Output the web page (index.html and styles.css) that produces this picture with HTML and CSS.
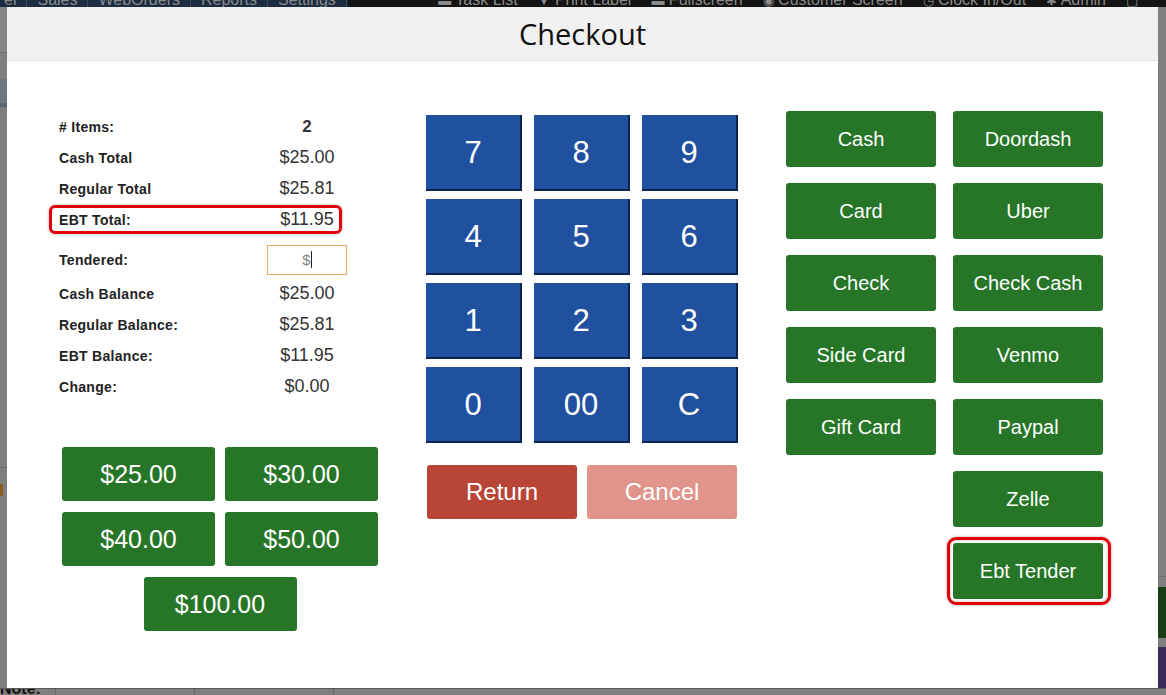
FILE: index.html
```html
<!DOCTYPE html>
<html lang="en">
<head>
  <meta charset="UTF-8" />
  <meta name="viewport" content="width=device-width, initial-scale=1.0"/>
  <title>Checkout</title>
  <link rel="stylesheet" href="styles.css">
</head>
<body>

  <div class="page">
    <nav class="topnav">
      <div class="nav-left">
        <a href="#">el</a>
        <a href="#">Sales</a>
        <a href="#">WebOrders</a>
        <a href="#">Reports</a>
        <a href="#">Settings</a>
      </div>
      <div class="nav-right">
        <a href="#"><i>&#9644;</i> Task List</a>
        <a href="#"><i>&#9660;</i> Print Label</a>
        <a href="#"><i>&#9644;</i> Fullscreen</a>
        <a href="#"><i>&#9673;</i> Customer Screen</a>
        <a href="#"><i>&#9719;</i> Clock In/Out</a>
        <a href="#"><i>&#10033;</i> Admin</a>
        <a href="#"><i>&#9634;</i></a>
      </div>
    </nav>
    <div class="page-row">
      <div class="side-left">
        <div class="sl-top"></div>
        <div class="sl-band"></div>
        <div class="sl-fill"></div>
        <div class="sl-mark"></div>
        <div class="sl-fill2"></div>
      </div>
      <div class="page-main"></div>
      <div class="side-right">
        <div class="sr-fill"></div>
        <div class="sr-green"></div>
        <div class="sr-purple"></div>
      </div>
    </div>
    <div class="page-foot">
      <b>Note:</b>
      <span class="foot-cell"></span>
      <span class="foot-cell wide"></span>
    </div>
  </div>

  <div class="modal">
    <div class="modal-head">
      <h1>Checkout</h1>
    </div>
    <div class="modal-body">

      <div class="col-summary">
        <div class="summary">
          <div class="row"><span class="lbl"># Items:</span><span class="val strong">2</span></div>
          <div class="row"><span class="lbl">Cash Total</span><span class="val">$25.00</span></div>
          <div class="row"><span class="lbl">Regular Total</span><span class="val">$25.81</span></div>
          <div class="row marked"><span class="lbl">EBT Total:</span><span class="val">$11.95</span></div>
          <div class="row tendered"><span class="lbl">Tendered:</span><div class="tender-input">$<span class="caret"></span></div></div>
          <div class="row"><span class="lbl">Cash Balance</span><span class="val">$25.00</span></div>
          <div class="row"><span class="lbl">Regular Balance:</span><span class="val">$25.81</span></div>
          <div class="row"><span class="lbl">EBT Balance:</span><span class="val">$11.95</span></div>
          <div class="row"><span class="lbl">Change:</span><span class="val">$0.00</span></div>
        </div>

        <div class="quick">
          <button class="btn-green">$25.00</button>
          <button class="btn-green">$30.00</button>
          <button class="btn-green">$40.00</button>
          <button class="btn-green">$50.00</button>
          <button class="btn-green wide">$100.00</button>
        </div>
      </div>

      <div class="col-keypad">
        <div class="keypad">
          <button>7</button><button>8</button><button>9</button>
          <button>4</button><button>5</button><button>6</button>
          <button>1</button><button>2</button><button>3</button>
          <button>0</button><button>00</button><button>C</button>
        </div>
        <div class="actions">
          <button class="btn-return">Return</button>
          <button class="btn-cancel">Cancel</button>
        </div>
      </div>

      <div class="col-tender">
        <button class="btn-green">Cash</button>
        <button class="btn-green">Doordash</button>
        <button class="btn-green">Card</button>
        <button class="btn-green">Uber</button>
        <button class="btn-green">Check</button>
        <button class="btn-green">Check Cash</button>
        <button class="btn-green">Side Card</button>
        <button class="btn-green">Venmo</button>
        <button class="btn-green">Gift Card</button>
        <button class="btn-green">Paypal</button>
        <button class="btn-green second">Zelle</button>
        <button class="btn-green second marked">Ebt Tender</button>
      </div>

    </div>
  </div>

</body>
</html>
```

FILE: styles.css
```css
body {
  margin: 0;
  padding: 0;
  font-family: "Liberation Sans", Arial, sans-serif;
  background: #7f7f7f;
  overflow: hidden;
}
button {
  font-family: "Liberation Sans", Arial, sans-serif;
  border: none;
  color: white;
  cursor: pointer;
  padding: 0;
}

/* dimmed page behind the dialog */
.page {
  height: 695px;
  display: flex;
  flex-direction: column;
}
.topnav {
  height: 7px;
  overflow: hidden;
  display: flex;
  background: #141414;
}
.topnav a {
  display: block;
  color: #8a8a8a;
  text-decoration: none;
  font-size: 16px;
  line-height: 20px;
  margin-top: -10px;
}
.nav-left {
  display: flex;
  background: #1d2d40;
  width: 348px;
}
.nav-left a {
  padding: 0 10px;
  border-right: 1px solid #3a4b5e;
}
.nav-left a:first-child {
  margin-left: -6px;
}
.nav-right {
  flex: 1;
  display: flex;
  justify-content: flex-end;
  gap: 20px;
  padding-right: 28px;
}
.nav-right i {
  font-style: normal;
  font-size: 13px;
}
.page-row {
  flex: 1;
  display: flex;
}
.side-left {
  width: 7px;
  display: flex;
  flex-direction: column;
}
.sl-top {
  height: 45px;
  background: #868686;
  border-bottom: 1px solid #6a6a6a;
}
.sl-band {
  height: 24px;
  margin-top: 26px;
  background: #6e7682;
  border-bottom: 4px solid #5c6470;
}
.sl-fill {
  height: 360px;
  border-bottom: 1px solid #6a6a6a;
}
.sl-mark {
  height: 12px;
  margin-top: 16px;
  width: 3px;
  background: #8a5a20;
}
.sl-fill2 {
  flex: 1;
}
.page-main {
  flex: 1;
}
.side-right {
  width: 8px;
  display: flex;
  flex-direction: column;
}
.sr-fill {
  height: 569px;
  border-bottom: 1px solid #6c6c6c;
}
.sr-green {
  height: 51px;
  margin-top: 10px;
  background: #173c16;
}
.sr-purple {
  height: 41px;
  margin-top: 9px;
  background: #3b2a5c;
}
.page-foot {
  height: 7px;
  overflow: hidden;
  display: flex;
  border-top: 1px solid #5a5a5a;
}
.page-foot b {
  font-size: 16px;
  line-height: 16px;
  margin-top: -8px;
  color: #111;
  width: 55px;
  border-right: 1px solid #666;
}
.foot-cell {
  width: 138px;
  border-right: 1px solid #666;
}

/* dialog */
.modal {
  position: fixed;
  top: 7px;
  left: 7px;
  width: 1151px;
  height: 681px;
  background: white;
}
.modal-head {
  height: 54px;
  background: #f0f0f0;
  border-bottom: 1px solid #e2e2e2;
  box-sizing: border-box;
  text-align: center;
}
.modal-head h1 {
  margin: 0;
  font-family: "Open Sans", sans-serif;
  font-weight: normal;
  font-size: 29px;
  line-height: 54px;
  color: #111;
}
.modal-body {
  display: flex;
  gap: 48px;
  padding: 50px 0 0 52px;
}

/* totals */
.col-summary {
  width: 319px;
}
.summary {
  width: 288px;
}
.row {
  display: grid;
  grid-template-columns: 208px 80px;
  align-items: center;
  height: 31px;
}
.lbl {
  font-size: 14px;
  font-weight: bold;
  color: #222;
  letter-spacing: 0.3px;
}
.val {
  text-align: center;
  font-size: 18px;
  color: #333;
}
.val.strong {
  font-weight: bold;
  font-size: 17px;
}
.row.marked {
  position: relative;
}
.row.marked::after {
  content: "";
  position: absolute;
  top: 1px;
  bottom: 1px;
  left: -10px;
  right: 5px;
  border: 3px solid #e4000b;
  border-radius: 6px;
  box-shadow: 0 0 3px rgba(0, 0, 0, 0.35);
}
.row.tendered {
  height: auto;
  padding: 10px 0 3px;
}
.tender-input {
  height: 30px;
  box-sizing: border-box;
  border: 1px solid #f2a65e;
  text-align: center;
  line-height: 28px;
  font-size: 15px;
  color: #888;
}
.caret {
  display: inline-block;
  width: 1px;
  height: 17px;
  background: #222;
  vertical-align: -3px;
}

.quick {
  display: grid;
  grid-template-columns: 153px 153px;
  gap: 11px 10px;
  margin: 45px 0 0 3px;
}
.quick .btn-green {
  height: 54px;
  font-size: 25px;
}
.quick .wide {
  grid-column: 1 / -1;
  justify-self: center;
  width: 153px;
}
.btn-green {
  background: #277627;
  border-radius: 3px;
}

/* keypad */
.col-keypad {
  width: 312px;
  padding-top: 4px;
}
.keypad {
  display: grid;
  grid-template-columns: repeat(3, 96px);
  grid-auto-rows: 76px;
  gap: 8px 12px;
}
.keypad button {
  background: #2050a0;
  border-right: 2px solid #0c2352;
  border-bottom: 2px solid #0c2352;
  font-size: 31px;
  padding-top: 2px;
}
.actions {
  display: flex;
  gap: 10px;
  margin: 22px 0 0 1px;
}
.actions button {
  width: 150px;
  height: 54px;
  font-size: 24px;
  border-radius: 3px;
}
.btn-return {
  background: #b94536;
}
.btn-cancel {
  background: #e0948a;
}

/* tender types */
.col-tender {
  display: grid;
  grid-template-columns: 150px 150px;
  grid-auto-rows: 56px;
  gap: 16px 17px;
  align-content: start;
}
.col-tender .btn-green {
  font-size: 20px;
}
.col-tender .second {
  grid-column: 2;
}
.col-tender .marked {
  position: relative;
}
.col-tender .marked::after {
  content: "";
  position: absolute;
  top: -6px;
  bottom: -6px;
  left: -6px;
  right: -8px;
  border: 3px solid #e4000b;
  border-radius: 9px;
  box-shadow: 0 0 3px rgba(0, 0, 0, 0.35), inset 0 0 3px rgba(0, 0, 0, 0.3);
}
```
